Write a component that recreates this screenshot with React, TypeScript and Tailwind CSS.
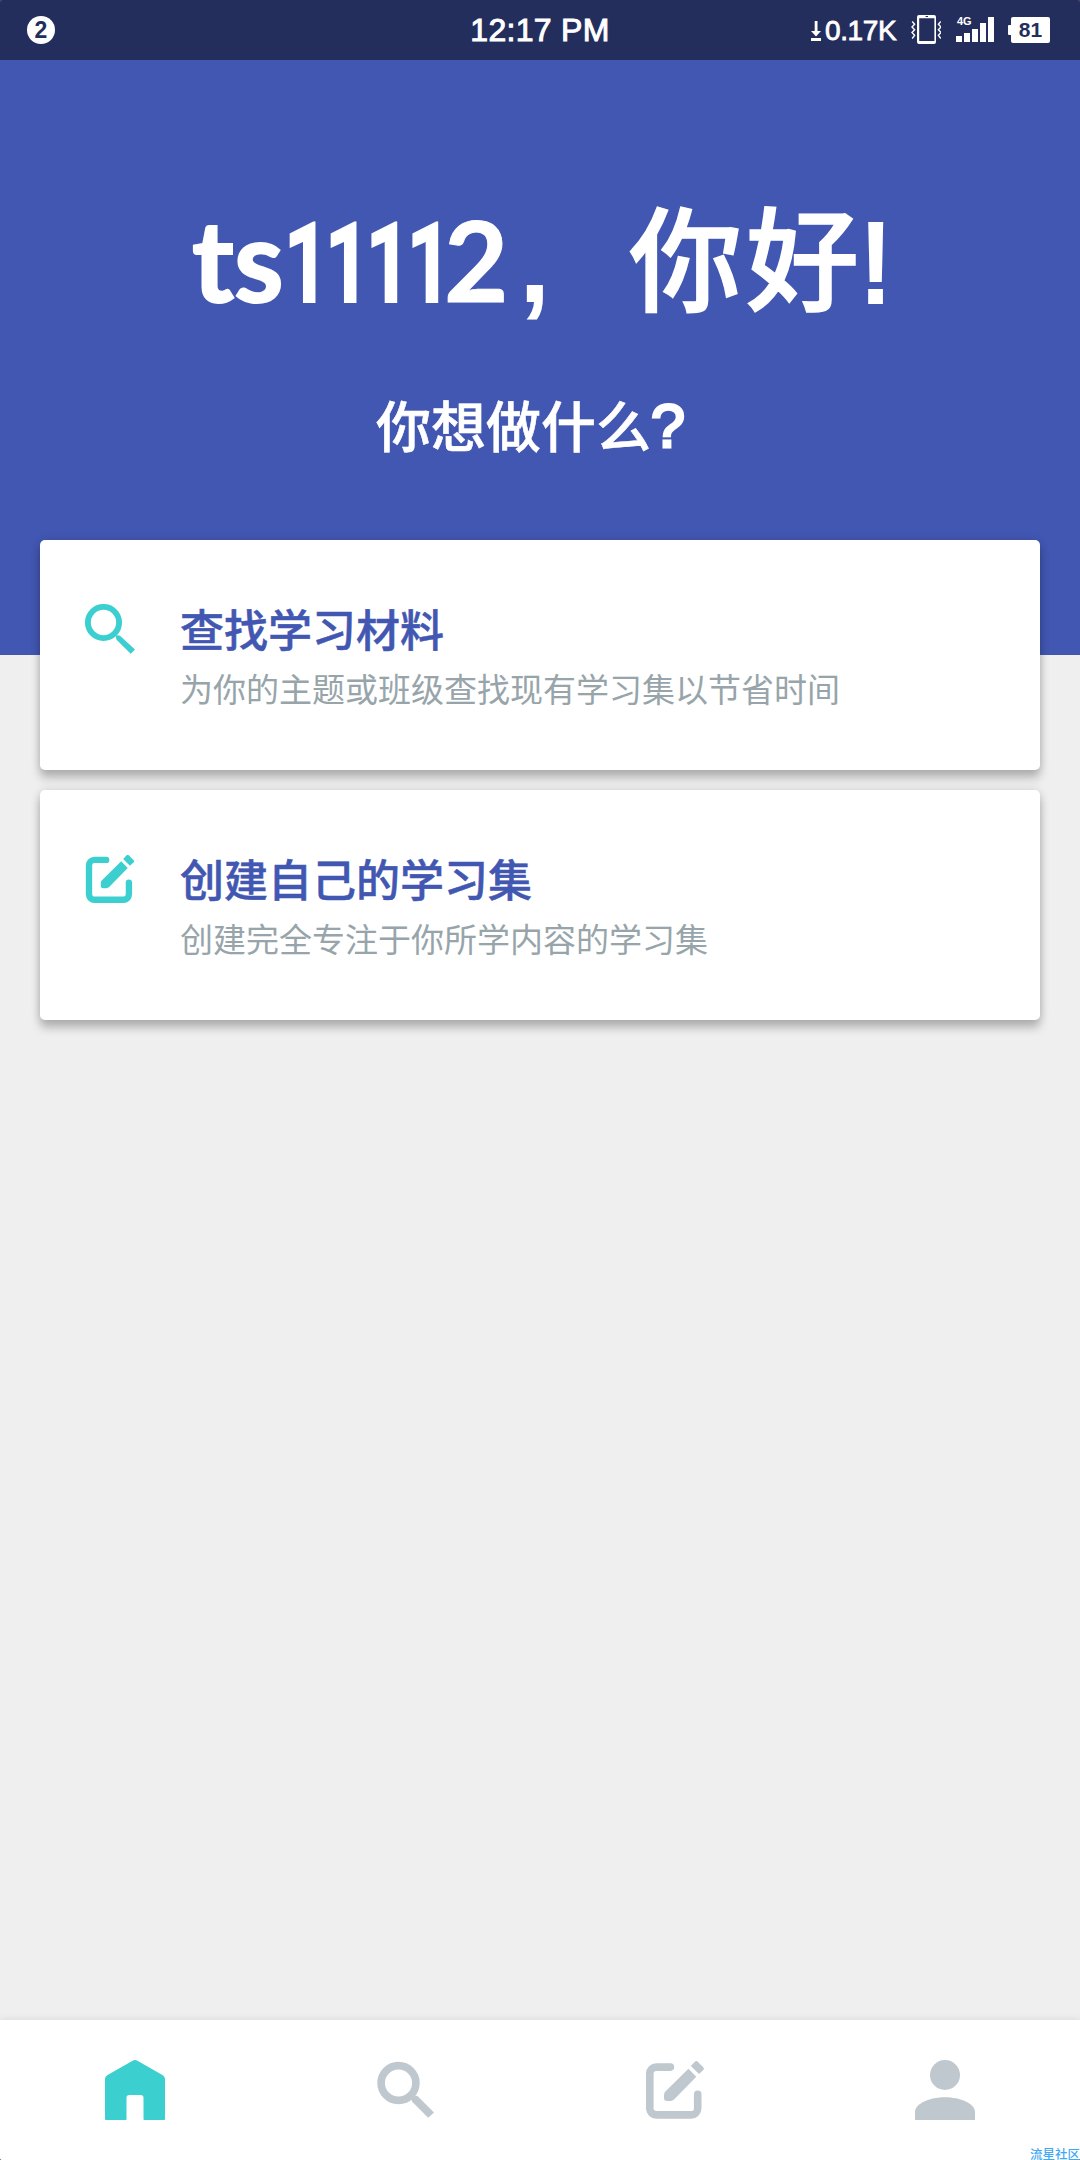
import React from "react";

type IconProps = { className?: string };

function EditIcon({ className }: IconProps) {
  return (
    <svg viewBox="0 0 60 60" className={className} fill="none">
      <path
        d="M25.4 7.1H11.3A6.5 6.5 0 0 0 4.8 13.6V48.4A6.5 6.5 0 0 0 11.3 54.9H46.2A6.5 6.5 0 0 0 52.7 48.4V34.4"
        stroke="currentColor"
        strokeWidth="7.6"
        strokeLinecap="round"
      />
      <path
        d="M43.4 8.8L51.3 16.8L29 39.6Q27.6 41 25.6 41H22Q19 41 19 38V35Q19 33 20.4 31.6Z"
        fill="currentColor"
      />
      <path
        d="M45.8 6L50 1.6Q51.3 .4 52.6 1.6L58.4 7.6Q59.5 8.8 58.4 10L54 14Z"
        fill="currentColor"
      />
    </svg>
  );
}

function CardSearchIcon({ className }: IconProps) {
  return (
    <svg viewBox="0 0 50 50" className={className}>
      <circle cx="18.5" cy="18.5" r="15.6" fill="none" stroke="currentColor" strokeWidth="5.9" />
      <path d="M30.6 31.6L33.4 31.2Q34.8 31.6 35.6 32.2L50 45.4L45.7 49.8L31.8 36Q31 35 31 33.6Z" fill="currentColor" />
    </svg>
  );
}

function NavSearchIcon({ className }: IconProps) {
  return (
    <svg viewBox="0 0 60 60" className={className}>
      <circle cx="23.5" cy="23" r="17.4" fill="none" stroke="currentColor" strokeWidth="7.6" />
      <path d="M36.6 39.2L39.4 36.2Q41.4 35.2 43 36.4L59 52.4L53.2 57.8L37.2 41.8Q36.4 40.8 36.6 39.2Z" fill="currentColor" />
    </svg>
  );
}

function HomeIcon({ className }: IconProps) {
  return (
    <svg viewBox="0 0 60 60" className={className}>
      <path
        d="M0 59V18.8Q0 16.6 2.6 14.9L27.6 .8Q30 -.7 32.4 .8L57.4 14.9Q60 16.6 60 18.8V59Q60 60 59 60H39.3Q38.5 60 38.5 59.2V37.8Q38.5 35 35.7 35H24.3Q21.5 35 21.5 37.8V59.2Q21.5 60 20.7 60H1Q0 60 0 59Z"
        fill="currentColor"
      />
    </svg>
  );
}

function UserIcon({ className }: IconProps) {
  return (
    <svg viewBox="0 0 60 60" className={className} fill="currentColor">
      <circle cx="30" cy="15" r="15" />
      <path d="M0 60V52C0 43.5 14.5 37.2 30 37.2S60 43.5 60 52V60Z" />
    </svg>
  );
}

function StatusBar() {
  return (
    <div className="grid h-[60px] shrink-0 grid-cols-3 items-center bg-[#242e5c] font-['Liberation_Sans',sans-serif] text-white">
      <div className="ml-[27px] flex h-7 w-7 items-center justify-center rounded-full bg-white text-[23px] leading-7 font-bold text-[#242e5c]">
        2
      </div>
      <div className="text-center text-[32px] leading-[60px] tracking-[0.3px] [-webkit-text-stroke:1px_white]">12:17 PM</div>
      <div className="flex h-[60px] items-center justify-end pr-[30px]">
        <svg viewBox="0 0 10 20" className="mt-[2px] h-5 w-[10px]" fill="white">
          <path d="M3.7 0H6.5V10H10L5 15.4L0 10H3.7Z" />
          <path d="M0 17H10V20H0Z" />
        </svg>
        <span className="mt-[2px] ml-[4px] w-[72px] text-[28px] leading-[60px] tracking-[-0.4px] [-webkit-text-stroke:0.8px_white]">0.17K</span>
        <svg viewBox="0 0 30 30" className="ml-[14px] h-[30px] w-[30px]" fill="none" stroke="white">
          <path fill="white" stroke="none" fillRule="evenodd" d="M8 0H23Q25 0 25 2V27Q25 29 23 29H8Q6 29 6 27V2Q6 0 8 0ZM8.2 3.2V26H23.4V3.2ZM14.6 1V2H17V1Z" />
          <path d="M1.2 6.5L3.6 9.3L1 12L3.6 14.8L1 17.5L3.6 20.3L1.2 23.5" strokeWidth="1.4" />
          <path d="M29.8 6.5L27.4 9.3L30 12L27.4 14.8L30 17.5L27.4 20.3L29.8 23.5" strokeWidth="1.4" />
        </svg>
        <div className="relative -mt-[2px] ml-[15px] flex h-[26px] w-[38px] items-end gap-[2px]">
          <span className="absolute top-0 left-px text-[11px] leading-[11px] font-bold">4G</span>
          <i className="h-[6px] w-[6px] bg-white" />
          <i className="h-[9px] w-[6px] bg-white" />
          <i className="h-[13px] w-[6px] bg-white" />
          <i className="h-[19px] w-[6px] bg-white" />
          <i className="h-[25px] w-[6px] bg-white" />
        </div>
        <div className="ml-[14px] flex items-center">
          <i className="h-[10px] w-[3px] rounded-l-[1px] bg-white" />
          <div className="h-[26px] w-[39px] rounded-[2px] bg-white text-center text-[21px] leading-[25px] font-bold text-[#242e5c]">
            81
          </div>
        </div>
      </div>
    </div>
  );
}

type CardProps = { icon: React.ReactNode; title: string; text: string };

function ActionCard({ icon, title, text }: CardProps) {
  return (
    <section className="flex h-[230px] rounded-[5px] bg-white pt-[64px] pl-[45px] shadow-[0_8px_10px_rgba(0,0,0,0.23),0_0_10px_rgba(0,0,0,0.13)]">
      <div className="h-[50px] w-[50px] shrink-0 text-[#3ccfcf]">{icon}</div>
      <div className="-mt-[3px] ml-[45px]">
        <h3 className="text-[44px] leading-[54px] font-medium text-[#4257b2] [-webkit-text-stroke:0.5px_#4257b2]">{title}</h3>
        <p className="mt-[6px] text-[33px] leading-[54px] text-[#97a5aa]">{text}</p>
      </div>
    </section>
  );
}

export default function App() {
  return (
    <div className="bg-black">
      <div className="relative flex h-[2160px] w-[1080px] flex-col overflow-hidden rounded-[2px] bg-[#efefef] font-['Noto_Sans_CJK_SC',sans-serif]">
        <StatusBar />
        <header className="h-[595px] shrink-0 bg-[#4257b2] text-white">
          <h1 className="flex h-[160px] items-baseline pt-[113px] pl-[192px] text-[113px] leading-[160px] font-medium whitespace-nowrap">
            <span className="w-[92px] font-['Lato',sans-serif] font-bold [-webkit-text-stroke:2px_white]">ts</span>
            <span className="w-[160px] origin-left scale-x-[0.7] font-['Roboto',sans-serif] text-[112px] font-bold tracking-[-5.8px] [-webkit-text-stroke:2px_white]">1111</span>
            <span className="w-[75px] font-['Lato',sans-serif] text-[111px] font-bold [-webkit-text-stroke:1px_white]">2</span>
            <span className="w-[110px] font-['Liberation_Sans',sans-serif] font-bold">,</span>
            <span className="w-[231px] tracking-[4px] [-webkit-text-stroke:1.5px_white]">你好</span>
            <span className="font-['Liberation_Sans',sans-serif] font-normal [-webkit-text-stroke:4px_white]">!</span>
          </h1>
          <h2 className="mt-[163px] flex items-baseline pl-[376px] text-[55px] leading-[80px] font-medium [-webkit-text-stroke:0.6px_white]">
            你想做什么
            <span className="font-['Liberation_Sans',sans-serif] text-[61px] font-normal [-webkit-text-stroke:3px_white]">?</span>
          </h2>
        </header>
        <main className="-mt-[115px] flex grow flex-col gap-5 px-10">
          <ActionCard
            icon={<CardSearchIcon className="h-[50px] w-[50px]" />}
            title="查找学习材料"
            text="为你的主题或班级查找现有学习集以节省时间"
          />
          <ActionCard
            icon={<EditIcon className="h-[50px] w-[50px]" />}
            title="创建自己的学习集"
            text="创建完全专注于你所学内容的学习集"
          />
        </main>
        <nav className="grid h-[140px] shrink-0 grid-cols-4 place-items-center bg-white text-[#bfc8ce] shadow-[0_0_8px_rgba(0,0,0,0.1)]">
          <HomeIcon className="h-[60px] w-[60px] text-[#3ccfcf]" />
          <NavSearchIcon className="h-[60px] w-[60px]" />
          <EditIcon className="h-[60px] w-[60px]" />
          <UserIcon className="h-[60px] w-[60px]" />
        </nav>
        <span className="absolute right-0 bottom-0 text-[12.5px] leading-[12px] font-medium whitespace-nowrap text-[#3fa9f5]">流星社区</span>
      </div>
    </div>
  );
}
